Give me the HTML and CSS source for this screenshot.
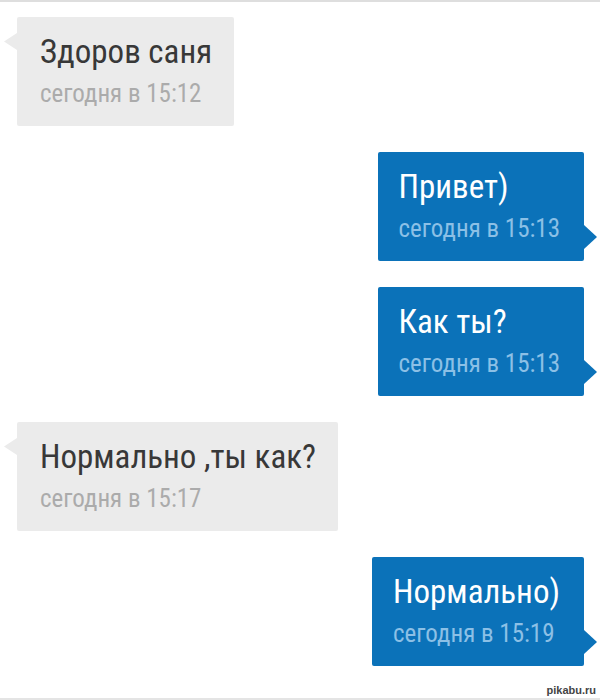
FILE: index.html
```html
<!DOCTYPE html>
<html lang="ru">
<head>
<meta charset="utf-8">
<title>Чат</title>
<link rel="stylesheet" href="styles.css">
</head>
<body>
<div class="screen">
  <div class="chat">
    <div class="msg in">
      <div class="bubble">
        <div class="text">Здоров саня</div>
        <div class="time">сегодня в 15:12</div>
      </div>
    </div>
    <div class="msg out">
      <div class="bubble">
        <div class="text">Привет)</div>
        <div class="time">сегодня в 15:13</div>
      </div>
    </div>
    <div class="msg out">
      <div class="bubble">
        <div class="text">Как ты?</div>
        <div class="time">сегодня в 15:13</div>
      </div>
    </div>
    <div class="msg in">
      <div class="bubble">
        <div class="text">Нормально ,ты как?</div>
        <div class="time">сегодня в 15:17</div>
      </div>
    </div>
    <div class="msg out">
      <div class="bubble">
        <div class="text">Нормально)</div>
        <div class="time">сегодня в 15:19</div>
      </div>
    </div>
  </div>
  <div class="watermark">pikabu.ru</div>
</div>
</body>
</html>
```
FILE: styles.css
```css
html, body {
  margin: 0;
  padding: 0;
  background: #ffffff;
}

.screen {
  position: relative;
  width: 600px;
  height: 700px;
  box-sizing: border-box;
  border-top: 2px solid #dedede;
  border-bottom: 2px solid #e4e4e4;
  overflow: hidden;
  font-family: "Roboto Condensed", Roboto, "Liberation Sans", sans-serif;
}

.chat {
  display: flex;
  flex-direction: column;
  gap: 26px;
  padding-top: 15px;
}

.msg {
  display: flex;
}

.msg.in {
  justify-content: flex-start;
  padding-left: 17px;
}

.msg.out {
  justify-content: flex-end;
  padding-right: 16px;
}

.bubble {
  position: relative;
  box-sizing: border-box;
  height: 109px;
  padding: 15px 22px 17px 23px;
  border-radius: 2px;
}

.msg.in .bubble {
  background: #ebebeb;
}

.msg.out .bubble {
  background: #0b72b9;
  padding-left: 21px;
  padding-right: 24px;
}

.bubble::before {
  content: "";
  position: absolute;
}

.msg.in .bubble::before {
  left: -13px;
  top: 16px;
  width: 13px;
  height: 17px;
  background: #ebebeb;
  clip-path: polygon(100% 0, 0 50%, 100% 100%);
}

.msg.out .bubble::before {
  right: -13px;
  top: 73px;
  width: 13px;
  height: 24px;
  background: #0b72b9;
  clip-path: polygon(0 0, 100% 50%, 0 100%);
}

.text {
  font-size: 33px;
  line-height: 40px;
  white-space: nowrap;
}

.time {
  margin-top: 7px;
  font-size: 25px;
  line-height: 30px;
  white-space: nowrap;
}

.msg.in .text {
  color: #383838;
}

.msg.in .time {
  color: #ababab;
}

.msg.out .text {
  color: #ffffff;
}

.msg.out .time {
  color: #8cc0e6;
}

.watermark {
  position: absolute;
  right: 4px;
  bottom: 2px;
  font-family: "Liberation Sans", sans-serif;
  font-size: 11px;
  font-weight: bold;
  color: #444444;
  text-shadow: 0 0 2px #ffffff, 0 0 2px #ffffff;
}
```
